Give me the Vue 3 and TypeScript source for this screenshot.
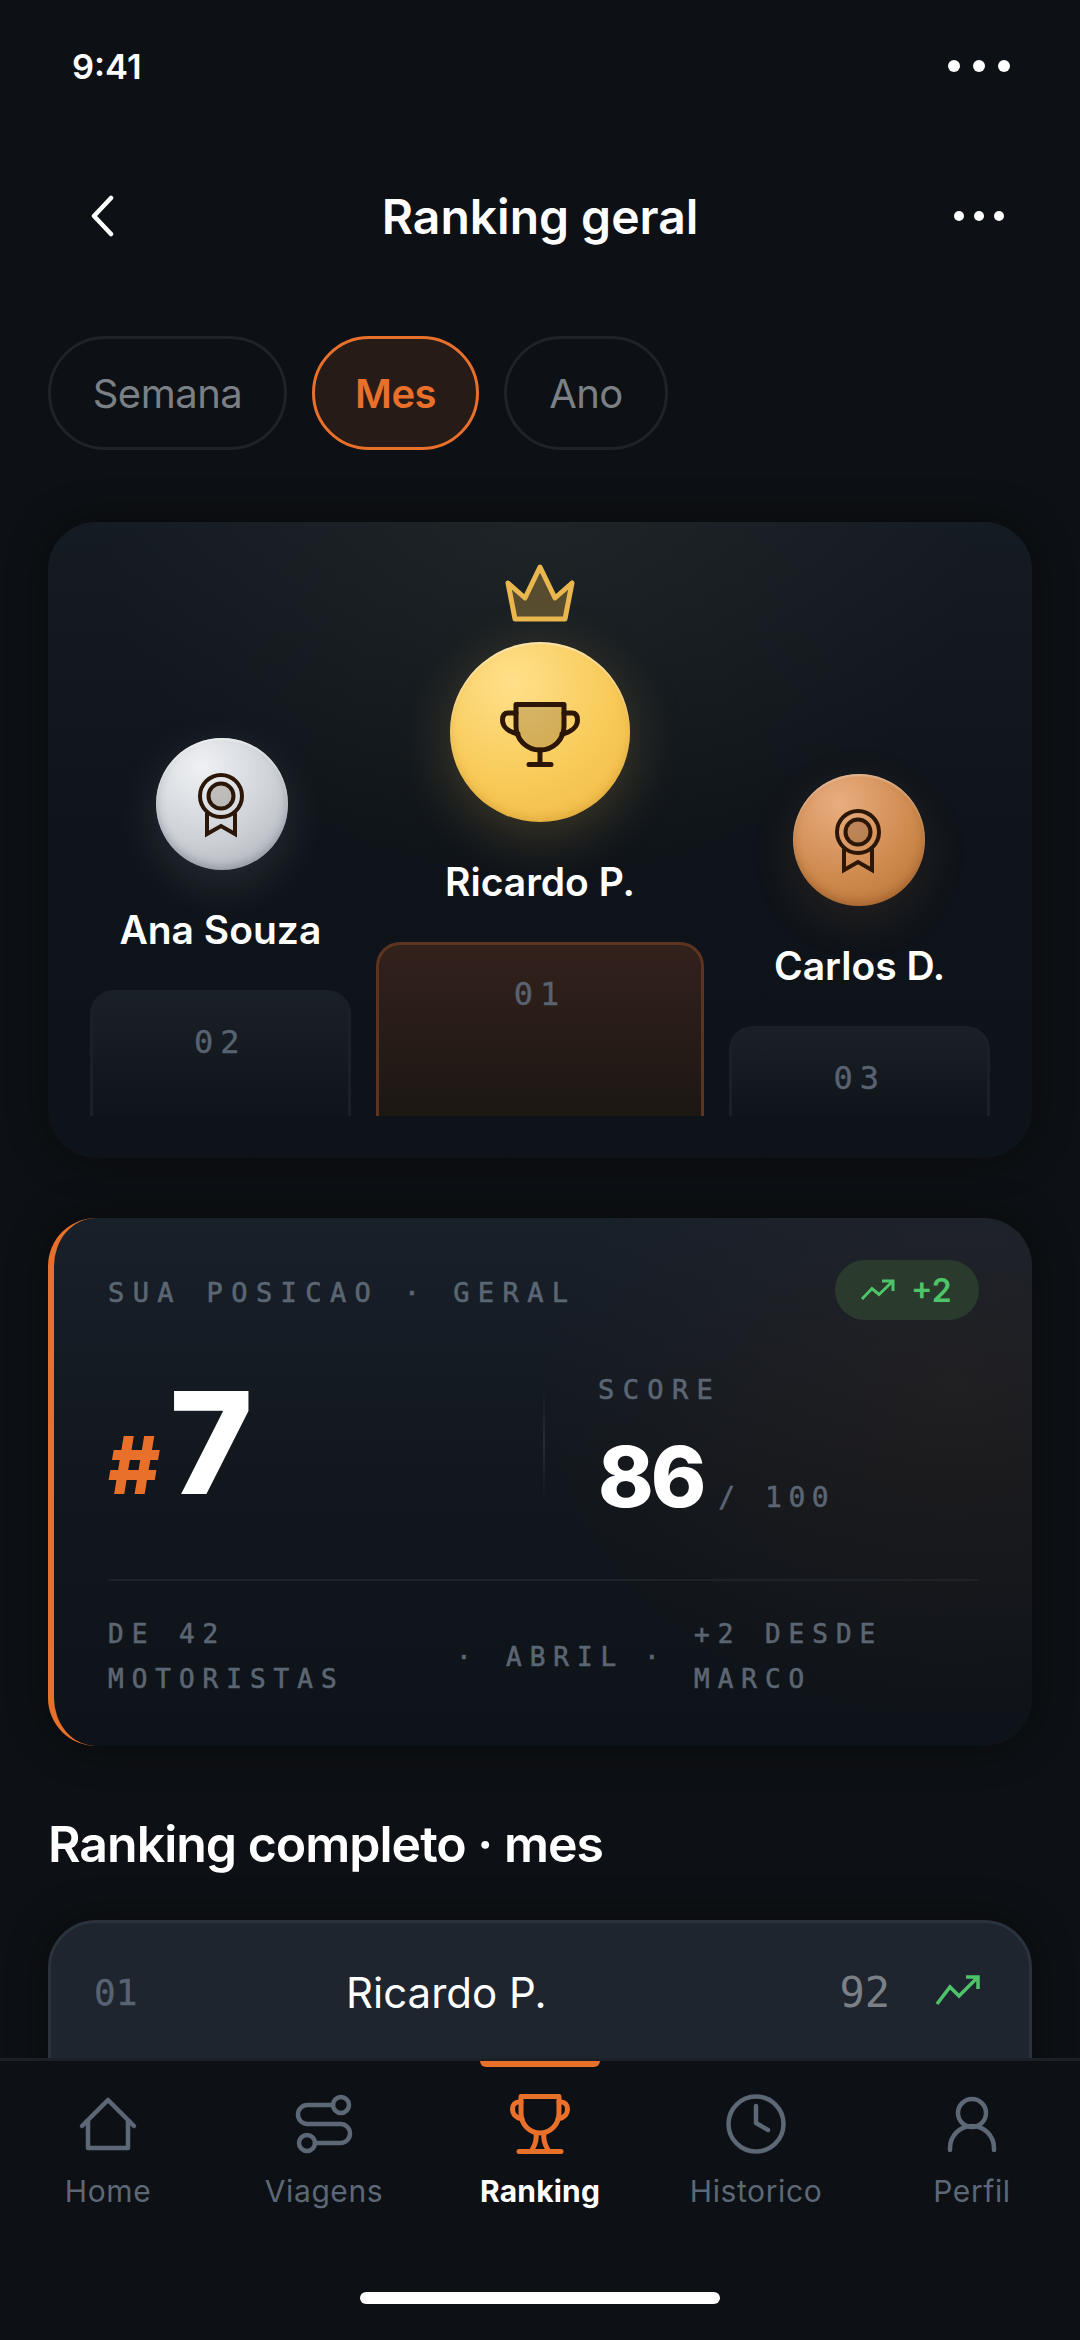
<script setup lang="ts">
interface Tab { label: string; active?: boolean }
const tabs: Tab[] = [{ label: 'Semana' }, { label: 'Mes', active: true }, { label: 'Ano' }]
</script>

<template>
  <div class="phone">
    <div class="top">
      <span class="time">9:41</span>
      <span class="dots big"><i></i><i></i><i></i></span>
    </div>
    <div class="scroll">
      <header class="head">
        <svg class="back" width="26" height="42" viewBox="0 0 26 42" fill="none">
          <path d="M22 3 L5 21 L22 39" stroke="#fff" stroke-width="4.500" stroke-linecap="round" stroke-linejoin="round" />
        </svg>
        <h1>Ranking geral</h1>
        <span class="dots"><i></i><i></i><i></i></span>
      </header>

      <div class="tabs">
        <button v-for="t in tabs" :key="t.label" class="tab" :class="{ on: t.active }">{{ t.label }}</button>
      </div>

      <section class="podium">
        <div class="col side">
          <div class="av silver">
            <svg width="56" height="68" viewBox="0 0 56 68" fill="none" stroke="#2b1607" stroke-width="4">
              <circle cx="27" cy="26" r="21" />
              <circle cx="27" cy="26" r="12.5" fill="rgba(60,35,15,.2)" />
              <path d="M13 43 V64 L27 56 L41 64 V43" />
            </svg>
          </div>
          <div class="name">Ana Souza</div>
          <div class="bar b2">02</div>
        </div>
        <div class="col mid">
          <svg class="crown" width="80" height="65" viewBox="0 0 80 65" fill="rgba(233,180,76,.3)" stroke="#eab64e" stroke-width="5" stroke-linejoin="round">
            <path d="M8 23 L25 38 L40 7 L55 38 L72 23 L65 59 H15 Z" />
          </svg>
          <div class="av gold">
            <svg class="cup" width="80" height="66" viewBox="0 0 80 66" fill="none" stroke="#2b1607" stroke-width="5" stroke-linecap="round" stroke-linejoin="round">
              <path d="M16 2.500 H64 V24 C64 38 53 48 40 48 C27 48 16 38 16 24 Z" fill="rgba(60,35,15,.2)" />
              <path d="M16 11 H8 C4 11 2.500 14 2.500 18 C2.500 25 9 30 18 32" />
              <path d="M64 11 H72 C76 11 77.500 14 77.500 18 C77.500 25 71 30 62 32" />
              <path d="M40 48 V62 M29 62.500 H51" />
            </svg>
          </div>
          <div class="name">Ricardo P.</div>
          <div class="bar b1">01</div>
        </div>
        <div class="col side">
          <div class="av bronze">
            <svg width="56" height="68" viewBox="0 0 56 68" fill="none" stroke="#2b1607" stroke-width="4">
              <circle cx="27" cy="26" r="21" />
              <circle cx="27" cy="26" r="12.5" fill="rgba(60,35,15,.2)" />
              <path d="M13 43 V64 L27 56 L41 64 V43" />
            </svg>
          </div>
          <div class="name">Carlos D.</div>
          <div class="bar b3">03</div>
        </div>
      </section>

      <section class="pos">
        <div class="pos-top">
          <span class="mono label top-label">SUA POSICAO · GERAL</span>
          <span class="delta">
            <svg width="36" height="26" viewBox="0 0 36 26" fill="none" stroke="#4ec46a" stroke-width="3">
              <path d="M2 22 L12 11.500 L19 17.500 L33 4 M22 4 H33 V14" />
            </svg>
            +2
          </span>
        </div>
        <div class="pos-main">
          <div class="rank"><span class="hash">#</span><span class="seven">7</span></div>
          <div class="score">
            <div class="mono label">SCORE</div>
            <div class="score-val"><b>86</b><span class="mono">/ 100</span></div>
          </div>
        </div>
        <div class="pos-foot mono">
          <span class="f1">DE 42<br />MOTORISTAS</span>
          <span class="dot">·</span>
          <span class="f2">ABRIL</span>
          <span class="dot">·</span>
          <span>+2 DESDE<br />MARCO</span>
        </div>
      </section>

      <h2>Ranking completo · mes</h2>

      <div class="row">
        <span class="mono r-no">01</span>
        <span class="r-name">Ricardo P.</span>
        <span class="mono r-val">92</span>
        <svg class="r-ic" width="48" height="34" viewBox="0 0 48 34" fill="none" stroke="#4ec46a" stroke-width="3.500">
          <path d="M4 31 L17 14 L26 23 L45 4 M33 4 H45 V16" />
        </svg>
      </div>
    </div>

    <nav class="nav">
      <div class="item">
        <svg width="60" height="62" viewBox="0 0 60 62" fill="none" stroke="currentColor" stroke-width="4.500" stroke-linecap="round" stroke-linejoin="round">
          <path d="M4 33 L30 7 L56 33 M10 28 V55 H50 V28" />
        </svg>
        <span>Home</span>
      </div>
      <div class="item">
        <svg width="60" height="62" viewBox="0 0 60 60" fill="none" stroke="currentColor" stroke-width="4.500" stroke-linecap="round" stroke-linejoin="round">
          <circle cx="47" cy="11" r="8" />
          <circle cx="13" cy="49" r="8" />
          <path d="M39 11 H13.500 A9.500 9.500 0 0 0 13.500 30 H46.500 A9.500 9.500 0 0 1 46.500 49 H21" />
        </svg>
        <span>Viagens</span>
      </div>
      <div class="item active">
        <i class="ind"></i>
        <svg width="60" height="62" viewBox="0 0 60 62" fill="none" stroke="currentColor" stroke-width="5" stroke-linecap="round" stroke-linejoin="round">
          <path d="M11 3.500 H49 V20 C49 32 40 40 30 40 C20 40 11 32 11 20 Z" />
          <path d="M11 9 H9 C5 9 2.500 12 2.500 16 C2.500 21 6 25 12 26" />
          <path d="M49 9 H51 C55 9 57.500 12 57.500 16 C57.500 21 54 25 48 26" />
          <path d="M26 40 C27 46 25 52 22 57 M34 40 C33 46 35 52 38 57" />
          <path d="M9 58.500 H51" />
        </svg>
        <span>Ranking</span>
      </div>
      <div class="item">
        <svg width="60" height="62" viewBox="0 0 60 60" fill="none" stroke="currentColor" stroke-width="4.500" stroke-linecap="round" stroke-linejoin="round">
          <circle cx="30" cy="30" r="27.500" />
          <path d="M30 12 V29 L42 36" />
        </svg>
        <span>Historico</span>
      </div>
      <div class="item">
        <svg width="60" height="62" viewBox="0 0 60 60" fill="none" stroke="currentColor" stroke-width="4.500" stroke-linecap="round" stroke-linejoin="round">
          <circle cx="30" cy="19" r="14" />
          <path d="M8 56 V54 A22 22 0 0 1 52 54 V56" />
        </svg>
        <span>Perfil</span>
      </div>
      <div class="home"></div>
    </nav>
  </div>
</template>

<style>
html, body { margin: 0; background: #0d1014; }
</style>

<style scoped>
.phone {
  width: 1080px; height: 2340px; background: #0d1014; color: #fff;
  font-family: Inter, "Noto Sans", sans-serif; display: flex; flex-direction: column; overflow: hidden;
}
.top { flex: none; height: 128px; box-sizing: border-box; padding: 4px 70px 0 72px; display: flex; align-items: center; justify-content: space-between; }
.time { font-size: 34.500px; font-weight: 600; }
.dots { display: flex; gap: 10px; }
.dots i { width: 10px; height: 10px; border-radius: 50%; background: #fff; }
.dots.big { gap: 13px; }
.dots.big i { width: 12px; height: 12px; }
.scroll { flex: 1; min-height: 0; overflow: hidden; padding: 0 48px; }
.head { margin-top: 40px; height: 96px; display: flex; align-items: center; justify-content: space-between; padding: 0 28px 0 41px; position: relative; }
.head h1 { position: absolute; left: 0; right: 0; margin: 0; text-align: center; font-size: 48px; font-weight: 600; }
.tabs { margin-top: 72px; display: flex; gap: 25px; }
.tab {
  flex: none; height: 114px; padding: 0; border-radius: 57px; border: 3px solid #1f2328; background: transparent;
  font: 400 40px Inter, sans-serif; letter-spacing: -0.5px; color: #7b8086; width: 239px;
}
.tab:nth-child(2) { width: 167px; }
.tab:nth-child(3) { width: 164px; }
.tab.on { border-color: #e8702a; background: #261b17; color: #e8702a; font-weight: 600; }

.podium {
  margin-top: 72px; height: 636px; box-sizing: border-box; padding: 0 42px 42px; border-radius: 48px;
  display: flex; justify-content: space-between; align-items: flex-end; gap: 25px; overflow: hidden;
  background:
    radial-gradient(ellipse 440px 360px at 50% 0, rgba(120,130,80,.09), transparent 100%),
    linear-gradient(180deg, #151b23, #0f141a 50%, #0e1319);
  box-shadow: 0 0 40px rgba(0,0,0,.35);
}
.col { display: flex; flex-direction: column; align-items: center; }
.side { width: 261px; }
.mid { width: 329px; }
.crown { margin-bottom: 17px; }
.av { border-radius: 50%; display: flex; align-items: center; justify-content: center; }
.cup { margin-top: 6px; }
.silver, .bronze { width: 132px; height: 132px; }
.silver {
  margin-left: 4px;
  background: radial-gradient(circle at 35% 22%, #eff1f4, #cdd1d6 55%, #a9adb5 100%);
  box-shadow: inset 0 2px 2px rgba(255,255,255,.5), inset 0 -4px 8px rgba(80,85,100,.35), 0 14px 48px rgba(200,205,215,.14);
}
.gold {
  width: 180px; height: 180px;
  background: radial-gradient(circle at 35% 22%, #ffe08a, #f8ca58 55%, #efb844 100%);
  box-shadow: inset 0 2px 2px rgba(255,255,255,.45), inset 0 -4px 8px rgba(170,110,20,.25), 0 12px 56px rgba(245,195,80,.22);
}
.bronze {
  margin-right: 2px;
  background: radial-gradient(circle at 35% 22%, #e8ad80, #cf8a4e 55%, #b57035 100%);
  box-shadow: inset 0 2px 2px rgba(255,255,255,.3), inset 0 -4px 8px rgba(100,50,10,.3), 0 14px 48px rgba(205,130,70,.12);
}
.name { margin-top: 36px; height: 48px; line-height: 48px; font-size: 39px; font-weight: 600; white-space: nowrap; }
.bar {
  margin-top: 36px; width: 100%; box-sizing: border-box; border: 3px solid #1a2027; border-bottom: 0; border-radius: 24px 24px 0 0;
  text-align: center; font: 400 32px "DejaVu Sans Mono", monospace; letter-spacing: 7px; color: #586270; padding-top: 30px;
  background: linear-gradient(180deg, #1a2027, #0f141a);
  -webkit-text-stroke: 0.4px #586270;
}
.b1 { height: 174px; background: linear-gradient(180deg, #33211c, #1c1713); border-color: #5d3420; }
.b2 { height: 126px; }
.b3 { height: 90px; }

.mono { font-family: "DejaVu Sans Mono", monospace; }
.label { display: block; font-size: 27px; letter-spacing: 8.400px; color: #5c6673; line-height: 34px; -webkit-text-stroke: 0.6px #5c6673; }
.top-label { margin-top: 6px; }
.pos {
  margin-top: 60px; height: 528px; box-sizing: border-box; border-left: 6px solid #e8702a; border-radius: 48px; padding: 42px 53px 0 54px;
  background:
    radial-gradient(ellipse 420px 340px at 92% 32%, rgba(232,112,42,.055), transparent 100%),
    linear-gradient(180deg, #18202a, #12171d 50%, #0e1319);
  box-shadow: 0 0 40px rgba(0,0,0,.35);
}
.pos-top { display: flex; justify-content: space-between; align-items: center; }
.delta {
  height: 60px; width: 144px; box-sizing: border-box; padding-left: 25px; border-radius: 30px; background: #2a3a2c; color: #4ec46a;
  display: flex; align-items: center; gap: 15px; font-size: 32px; font-weight: 600;
}
.pos-main { margin-top: 66px; height: 120px; display: flex; }
.rank {
  width: 437px; height: 114px; display: flex; align-items: baseline; line-height: 112px;
  background: linear-gradient(180deg, transparent, #272d34 50%, transparent) right / 2px 100% no-repeat;
}
.hash { font-size: 80px; font-weight: 800; color: #e8702a; margin-right: 9px; }
.seven { font-size: 142px; font-weight: 800; }
.score { padding-left: 53px; margin-top: -13px; }
.score-val { display: flex; align-items: baseline; margin-top: 24px; line-height: 92px; }
.score-val b { font-size: 84px; font-weight: 800; letter-spacing: -3px; }
.score-val span { font-size: 28px; letter-spacing: 6.500px; color: #5c6673; margin-left: 15px; -webkit-text-stroke: 0.5px #5c6673; }
.pos-foot {
  margin-top: 73px; border-top: 2px solid #1d2229; padding-top: 31px; display: flex; align-items: center; gap: 28px;
  font-size: 26px; letter-spacing: 8px; line-height: 45px; color: #5c6673; white-space: nowrap; -webkit-text-stroke: 0.6px #5c6673;
}
.f1 { width: 320px; }
.f2 { width: 110px; }
.dot { width: 22px; text-align: center; }

h2 { margin: 69px 0 0; height: 58px; line-height: 58px; font-size: 50px; font-weight: 600; letter-spacing: -1px; }
.row {
  margin-top: 47px; height: 200px; box-sizing: border-box; border: 3px solid #2a323c; border-radius: 48px; background: #1e252f;
  display: flex; align-items: flex-start; padding: 46px 48px 0 43px;
  box-shadow: 0 0 40px rgba(0,0,0,.35);
}
.r-no { width: 252px; font-size: 36px; color: #586270; line-height: 48px; -webkit-text-stroke: 0.4px #586270; }
.r-name { flex: 1; font-size: 42px; line-height: 48px; font-weight: 400; }
.r-val { font-size: 42px; color: #7b8087; line-height: 48px; margin-right: 43px; }
.r-ic { margin-top: 4px; }

.nav { flex: none; height: 282px; box-sizing: border-box; background: #0d1014; border-top: 3px solid #1d2127; display: flex; position: relative; }
.item { width: 216px; padding-top: 32px; display: flex; flex-direction: column; align-items: center; color: #5d6876; position: relative; }
.item span { margin-top: 16px; font-size: 30px; line-height: 40px; letter-spacing: 0.6px; }
.active { color: #e8702a; }
.active span { color: #fff; font-weight: 700; letter-spacing: 0.2px; }
.ind { position: absolute; top: 0; left: 48px; width: 120px; height: 6px; background: #e8702a; border-radius: 0 0 6px 6px; }
.home { position: absolute; left: 360px; top: 231px; width: 360px; height: 12px; border-radius: 6px; background: #fff; }
</style>
